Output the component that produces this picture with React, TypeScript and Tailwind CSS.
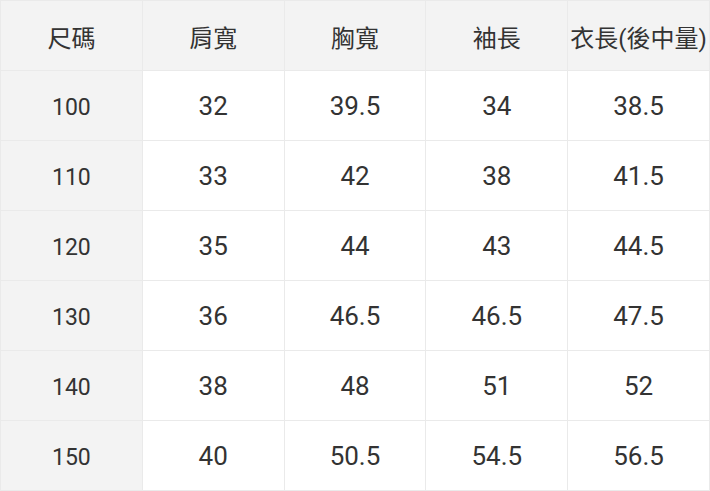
const HEADERS = ['尺碼', '肩寬', '胸寬', '袖長', '衣長(後中量)']

const ROWS = [
  ['100', '32', '39.5', '34', '38.5'],
  ['110', '33', '42', '38', '41.5'],
  ['120', '35', '44', '43', '44.5'],
  ['130', '36', '46.5', '46.5', '47.5'],
  ['140', '38', '48', '51', '52'],
  ['150', '40', '50.5', '54.5', '56.5'],
]

export default function App() {
  return (
    <div className="w-[710px] h-[491px] bg-white font-['Roboto','Noto_Sans_CJK_TC',sans-serif] text-[#333]">
      <table className="w-[710px] table-fixed border-collapse">
        <thead>
          <tr className="h-[70px] bg-[#f3f3f3]">
            {HEADERS.map(h => (
              <th key={h} className="border border-[#eaeaea] p-0 pt-[6px] text-[24px] font-normal text-center whitespace-nowrap">
                {h}
              </th>
            ))}
          </tr>
        </thead>
        <tbody>
          {ROWS.map(row => (
            <tr key={row[0]} className="h-[70px]">
              {row.map((v, i) => (
                <td
                  key={i}
                  className={
                    i === 0
                      ? 'border border-[#eaeaea] bg-[#f3f3f3] p-0 pt-[5px] text-center text-[23px]'
                      : 'border border-[#eaeaea] bg-white p-0 pt-[2px] text-center text-[26px]'
                  }
                >
                  {v}
                </td>
              ))}
            </tr>
          ))}
        </tbody>
      </table>
    </div>
  )
}
